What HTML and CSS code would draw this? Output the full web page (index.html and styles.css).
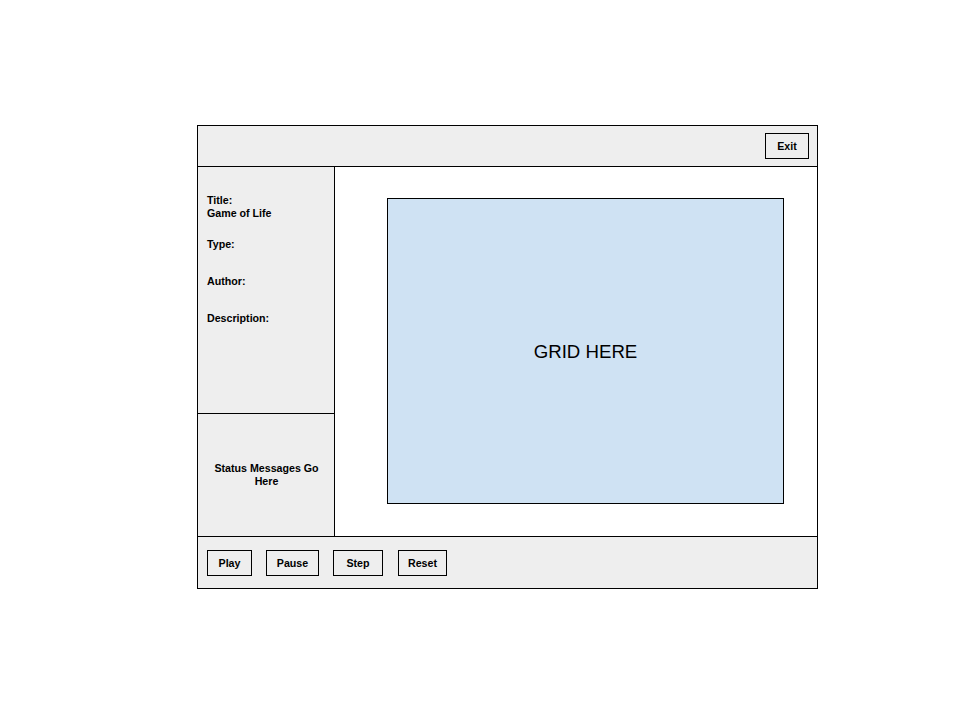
FILE: index.html
```html
<!DOCTYPE html>
<html>
<head>
<meta charset="utf-8">
<link rel="stylesheet" href="styles.css">
</head>
<body>
<div class="page">
  <div class="frame">
    <div class="topbar">
      <div class="btn btn-exit">Exit</div>
    </div>
    <div class="main">
      <div class="side">
        <div class="info">
          <div class="field field-title">Title:<br>Game of Life</div>
          <div class="field field-type">Type:</div>
          <div class="field field-author">Author:</div>
          <div class="field field-desc">Description:</div>
        </div>
        <div class="status">Status Messages Go<br>Here</div>
      </div>
      <div class="content">
        <div class="grid">GRID HERE</div>
      </div>
    </div>
    <div class="bottombar">
      <div class="btn btn-play">Play</div>
      <div class="btn btn-pause">Pause</div>
      <div class="btn btn-step">Step</div>
      <div class="btn btn-reset">Reset</div>
    </div>
  </div>
</div>
</body>
</html>
```

FILE: styles.css
```css
* { box-sizing: border-box; }
html, body { margin: 0; padding: 0; background: #ffffff; }
body { font-family: "Liberation Sans", Arial, sans-serif; color: #000; }
.page { width: 960px; height: 720px; padding: 125px 0 0 197px; }
.frame {
  width: 621px;
  height: 464px;
  border: 1px solid #000;
  display: flex;
  flex-direction: column;
}
.topbar {
  height: 41px;
  background: #eeeeee;
  border-bottom: 1px solid #000;
  display: flex;
  justify-content: flex-end;
  align-items: flex-start;
  padding: 7px 8px 0 0;
}
.btn {
  height: 26px;
  border: 1px solid #000;
  font-size: 10.67px;
  font-weight: bold;
  display: flex;
  align-items: center;
  justify-content: center;
  background: transparent;
}
.btn-exit { width: 44px; }
.main {
  height: 370px;
  display: flex;
  border-bottom: 1px solid #000;
}
.side {
  width: 137px;
  background: #eeeeee;
  border-right: 1px solid #000;
  display: flex;
  flex-direction: column;
}
.info {
  height: 247px;
  border-bottom: 1px solid #000;
  padding: 27px 0 0 9px;
  display: flex;
  flex-direction: column;
}
.field { font-size: 10.67px; font-weight: bold; line-height: 13px; }
.field-type { margin-top: 18px; }
.field-author { margin-top: 24px; }
.field-desc { margin-top: 24px; }
.status {
  flex: 1;
  display: flex;
  align-items: center;
  justify-content: center;
  text-align: center;
  font-size: 10.67px;
  font-weight: bold;
  line-height: 13px;
  padding: 0 0 1px 1px;
}
.content {
  flex: 1;
  background: #ffffff;
  padding: 31px 33px 0 52px;
}
.grid {
  width: 397px;
  height: 306px;
  background: #cfe2f3;
  border: 1px solid #000;
  display: flex;
  align-items: center;
  justify-content: center;
  font-size: 18.67px;
  padding-top: 2px;
}
.bottombar {
  flex: 1;
  background: #eeeeee;
  display: flex;
  align-items: flex-start;
  padding: 13px 0 0 9px;
  gap: 14px;
}
.btn-play { width: 45px; }
.btn-pause { width: 53px; }
.btn-step { width: 50px; }
.btn-reset { width: 49px; margin-left: 1px; }
```
